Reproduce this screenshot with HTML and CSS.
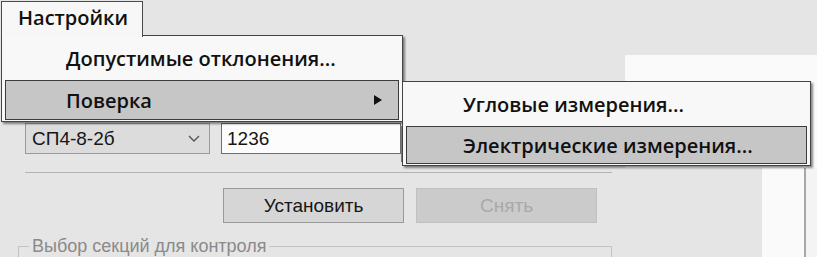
FILE: index.html
```html
<!DOCTYPE html>
<html>
  <head>
    <meta charset="utf-8" />
    <title>Настройки</title>
    <link rel="stylesheet" href="styles.css">
  </head>
  <body>
    <div class="window">
      <div class="menubar">
        <div class="tab">Настройки</div>
      </div>

      <div class="form">
        <div class="group-top">
          <div class="field-row">
            <div class="combo">
              <span>СП4-8-2б</span>
              <svg class="chevron" width="12" height="7" viewBox="0 0 12 7">
                <polyline points="1,1 6,6 11,1" fill="none" stroke="#555" stroke-width="1.4" />
              </svg>
            </div>
            <div class="text-input">1236</div>
            <div class="small-btn"></div>
          </div>
        </div>

        <div class="buttons">
          <div class="btn">Установить</div>
          <div class="btn disabled">Снять</div>
        </div>

        <fieldset class="sections">
          <legend>Выбор секций для контроля</legend>
        </fieldset>
      </div>

      <div class="side">
        <div class="side-top"></div>
        <div class="side-bottom">
          <div class="side-gap"></div>
          <div class="side-col"></div>
          <div class="side-sep"></div>
          <div class="side-rest"></div>
        </div>
      </div>

      <!-- выпадающее меню -->
      <div class="menu">
        <div class="item">Допустимые отклонения...</div>
        <div class="item active">
          Поверка
          <span class="arrow"></span>
        </div>
      </div>

      <!-- подменю "Поверка" -->
      <div class="menu submenu">
        <div class="item">Угловые измерения...</div>
        <div class="item active">Электрические измерения...</div>
      </div>
    </div>
  </body>
</html>
```

FILE: styles.css
```css
* {
  box-sizing: border-box;
}
body {
  margin: 0;
  background-color: #e5e5e5;
  font-family: "Liberation Sans", Arial, sans-serif;
  color: #161616;
}

.window {
  position: relative;
  width: 817px;
  height: 257px;
  overflow: hidden;
  display: grid;
  grid-template-columns: 625px 192px;
  grid-template-rows: 55px 202px;
}

.menubar {
  grid-column: 1 / 3;
  grid-row: 1;
}
.tab {
  position: relative;
  z-index: 3;
  margin: 1px 0 0 1px;
  width: 142px;
  height: 36px;
  padding-left: 16px;
  background-color: #f7f7f7;
  border: 1px solid #4a4a4a;
  border-bottom: none;
  font-family: "Open Sans", "Noto Sans", sans-serif;
  font-weight: 600;
  font-size: 20px;
  line-height: 32px;
  color: #111;
}

/* форма под меню */
.form {
  grid-column: 1;
  grid-row: 2;
}
.group-top {
  margin: 0 13px 0 25px;
  padding-top: 68px;
  padding-bottom: 18px;
  border-bottom: 1px solid #b3b3b3;
}
.field-row {
  display: flex;
  height: 31px;
}
.combo {
  display: flex;
  align-items: center;
  justify-content: space-between;
  width: 185px;
  padding: 0 9px 0 6px;
  background-color: #dcdcdc;
  border: 1px solid #9a9a9a;
  font-size: 19px;
}
.text-input {
  width: 180px;
  margin-left: 11px;
  padding-left: 5px;
  background-color: #fcfcfc;
  border: 1px solid #6e6e6e;
  font-size: 19px;
  line-height: 29px;
}
.small-btn {
  width: 40px;
  margin-top: 3px;
  height: 36px;
  background-color: #dadada;
  border: 1px solid #777;
}

.buttons {
  display: flex;
  gap: 12px;
  margin-top: 15px;
  padding-left: 223px;
}
.btn {
  width: 181px;
  height: 35px;
  background-color: #d6d6d6;
  border: 1px solid #999;
  text-align: center;
  font-size: 19px;
  line-height: 33px;
}
.btn.disabled {
  background-color: #cbcbcb;
  border-color: #c0c0c0;
  color: #a9a9a9;
}

.sections {
  margin: 13px 13px 0 18px;
  padding: 0 10px;
  height: 60px;
  border: 1px solid #c2c2c2;
}
.sections legend {
  padding: 0 3px;
  color: #8a8a8a;
  font-size: 18px;
  line-height: 20px;
}

/* правая панель */
.side {
  grid-column: 2;
  grid-row: 2;
  display: flex;
  flex-direction: column;
}
.side-top {
  height: 113px;
  background-color: #fafafa;
}
.side-bottom {
  flex: 1;
  display: flex;
}
.side-gap {
  width: 137px;
}
.side-col {
  width: 42px;
  background-color: #fafafa;
}
.side-sep {
  width: 2px;
  background-color: #a8a8a8;
}
.side-rest {
  flex: 1;
  background-color: #f4f4f4;
}

/* меню */
.menu {
  position: absolute;
  z-index: 2;
  left: 1px;
  top: 35px;
  width: 402px;
  padding: 1px 3px;
  background-color: #f8f8f8;
  border: 1px solid #444;
  box-shadow: 2px 2px 2px rgba(0, 0, 0, 0.45);
  font-family: "Open Sans", "Noto Sans", sans-serif;
  font-weight: 600;
  font-size: 20px;
  color: #111;
}
.item {
  display: flex;
  align-items: center;
  height: 42px;
  padding-left: 61px;
}
.item.active {
  height: 40px;
  margin-top: 1px;
  padding-left: 60px;
  background-color: #c6c6c6;
  border: 1px solid #3c3c3c;
}
.arrow {
  margin-left: auto;
  margin-right: 16px;
  border-left: 8px solid #111;
  border-top: 5px solid transparent;
  border-bottom: 5px solid transparent;
}

.submenu {
  left: 402px;
  top: 81px;
  width: 409px;
}
.submenu .item {
  padding-left: 57px;
}
.submenu .item.active {
  height: 38px;
  padding-left: 56px;
}
```
